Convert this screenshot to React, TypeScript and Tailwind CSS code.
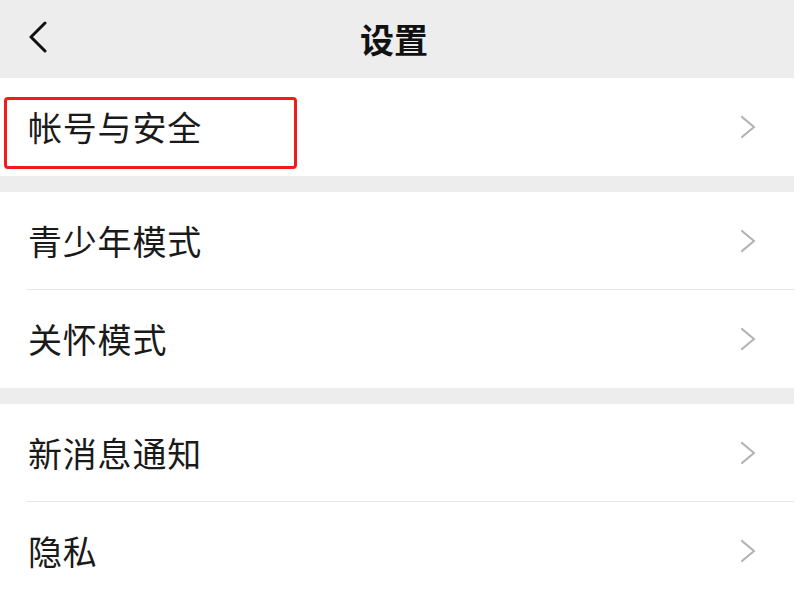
import { ReactNode } from "react";

const FONT = "font-['Noto_Sans_CJK_SC','Noto_Sans',sans-serif]";

function Chevron() {
  return (
    <svg width="16" height="24" viewBox="0 0 16 24" className="shrink-0">
      <path d="M2 2 L14 12 L2 22" fill="none" stroke="#b3b3b3" strokeWidth="2.2" strokeLinecap="round" strokeLinejoin="round" />
    </svg>
  );
}

function Row({ label, last, boxed }: { label: string; last?: boolean; boxed?: boolean }) {
  return (
    <div className="relative flex h-[98px] items-center">
      {boxed && (
        <div className="absolute left-[4px] top-[19px] h-[72px] w-[293px] rounded-[4px] border-[3px] border-[#f01c1c]" />
      )}
      <div className="flex h-full flex-1 items-center pl-[28px] pr-[38px]">
        <span className="flex-1 text-[34px] leading-none tracking-[0.8px] text-[#1a1a1a]">{label}</span>
        <Chevron />
      </div>
      {!last && <div className="absolute bottom-0 left-[27px] right-0 h-px bg-[#e6e6e6]" />}
    </div>
  );
}

function Section({ children }: { children: ReactNode }) {
  return <div className="bg-white">{children}</div>;
}

export default function App() {
  return (
    <div className={`flex h-[600px] w-[800px] overflow-hidden bg-white ${FONT}`}>
      <div className="flex w-[794px] flex-col bg-[#ededed]">
        <div className="relative flex h-[78px] shrink-0 items-center justify-center pr-[6px]">
          <svg width="22" height="32" viewBox="0 0 22 32" className="absolute left-[27px] top-[21px]">
            <path d="M18 2 L4 16 L18 30" fill="none" stroke="#111" strokeWidth="3" strokeLinecap="round" strokeLinejoin="round" />
          </svg>
          <span className="text-[34px] font-bold leading-none text-[#111]">设置</span>
        </div>
        <Section>
          <Row label="帐号与安全" last boxed />
        </Section>
        <div className="h-[16px] shrink-0" />
        <Section>
          <Row label="青少年模式" />
          <Row label="关怀模式" last />
        </Section>
        <div className="h-[16px] shrink-0" />
        <Section>
          <Row label="新消息通知" />
          <Row label="隐私" last />
        </Section>
      </div>
    </div>
  );
}
